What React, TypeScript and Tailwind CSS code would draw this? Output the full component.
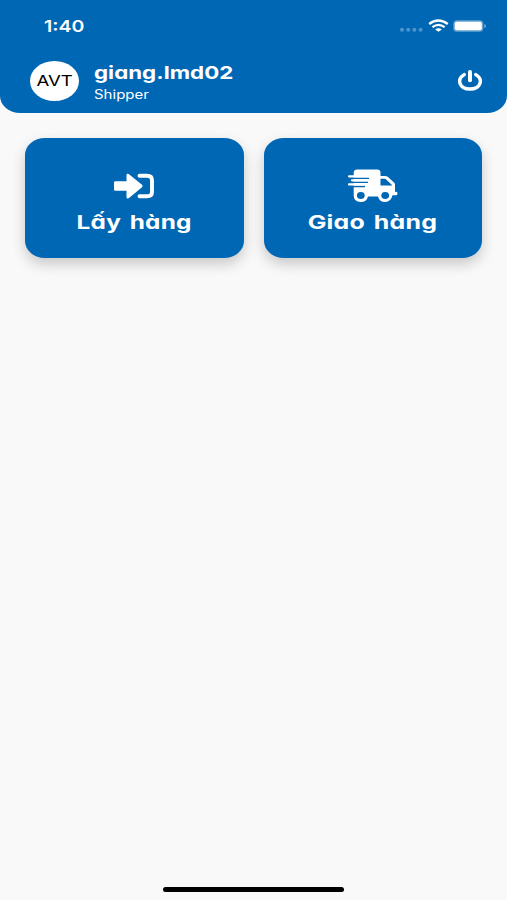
import type { ReactNode } from "react";

function ArrowIcon() {
  return (
    <svg className="h-[26px] w-[42px]" viewBox="0 0 42 26" fill="none">
      <path d="M2.5 8.2H13.5V2.3C13.5.7 15 .4 16 1.3L29 11.8Q30.3 13 29 14.2L16 24.9C15 25.8 13.5 25.4 13.5 23.9V17.8H2.5Q1 17.8 1 16.5V9.5Q1 8.2 2.5 8.2Z" fill="white" />
      <path d="M26.5 2.7H34Q39 2.7 39 7.2V19Q39 23.3 34 23.3H26.5" stroke="white" strokeWidth="3.9" strokeLinecap="round" />
    </svg>
  );
}

function TruckIcon() {
  return (
    <svg className="h-[34px] w-[50px]" viewBox="0 0 50 34" fill="none">
      <path d="M9 .5H29Q32.5 .5 32.5 3.500V7H37Q38.7 7 40 8L46 13.4Q47 14.3 47 15.6V22.8H48Q49.5 22.8 49.5 24.4Q49.5 26.3 47.5 26.3H44.500Q43 33 37.200 33T30 27.5H20Q18.7 33 12.6 33Q5.7 33 5.700 26.5V4Q5.7 .5 9 .5Z" fill="white" />
      <path d="M32.5 9.8H36.6Q37.5 9.8 38.2 10.5L44 16V16.6H32.5Z" fill="#0067b5" />
      <ellipse cx="12.8" cy="26.500" rx="3.9" ry="3.4" fill="#0067b5" />
      <ellipse cx="37.2" cy="26.500" rx="3.9" ry="3.4" fill="#0067b5" />
      <path d="M0 9.3H21M4 13.3H20M0 17.4H17" stroke="#0067b5" strokeWidth="1.5" />
      <path d="M1 7.3H22M4 11.3H21M1 15.3H18" stroke="white" strokeWidth="2.2" strokeLinecap="round" />
    </svg>
  );
}

function PowerIcon() {
  return (
    <svg className="h-[22px] w-[26px]" viewBox="0 0 26 22" fill="none" stroke="white" strokeLinecap="round">
      <path d="M7.2 4.6C-.7 9.3 2.3 19 13 19S26.700 9.300 18.800 4.600" strokeWidth="3.4" />
      <path d="M13 2V10.300" strokeWidth="4" />
    </svg>
  );
}

function StatusIcons() {
  return (
    <svg className="h-4 w-[88px]" viewBox="0 0 88 16" fill="none">
      <g fill="white" fillOpacity=".3">
        <circle cx="4" cy="11.800" r="2" />
        <circle cx="10.200" cy="11.800" r="2" />
        <circle cx="16.400" cy="11.800" r="2" />
        <circle cx="22.600" cy="11.800" r="2" />
      </g>
      <path d="M31.200 6Q40 -1 49.800 6M34.400 9.200Q40.500 4.500 46.600 9.200" stroke="white" strokeWidth="2.300" />
      <path d="M37.200 11.500Q40.500 8.800 43.800 11.500L40.500 13.800Z" fill="white" />
      <rect x="55.300" y="2.200" width="30" height="11.600" rx="3.500" fill="white" fillOpacity=".4" />
      <rect x="56.800" y="3.700" width="27" height="8.600" rx="2" fill="white" />
      <path d="M86.400 6V10Q88 9.300 88 8T86.400 6Z" fill="white" fillOpacity=".5" />
    </svg>
  );
}

function ActionCard({ icon, children }: { icon: ReactNode; children: ReactNode }) {
  return (
    <button className="flex h-[120px] flex-1 flex-col items-center rounded-[20px/17px] bg-[#0067b5] pt-[31px] text-white shadow-[0_6px_14px_rgba(0,0,0,0.2)]">
      <span className="flex h-[34px] items-center">{icon}</span>
      <span className="mt-[8px] text-[19px] leading-6 font-bold whitespace-nowrap">{children}</span>
    </button>
  );
}

export default function App() {
  return (
    <div className="flex h-[900px] w-[507px] flex-col bg-[#f9f9f9] font-['Inter','Liberation_Sans',sans-serif] [font-feature-settings:'cv11']">
      <header className="h-[113px] rounded-b-[20px_17px] bg-[#0067b5] text-white">
        <div className="flex h-[52px] items-center justify-between pr-[21px] pl-[44px]">
          <span className="origin-left scale-x-[1.220] text-[16px] leading-5 font-semibold">1:40</span>
          <StatusIcons />
        </div>
        <div className="flex h-[58px] items-center pr-[24px] pl-[30px]">
          <div className="flex h-[40px] w-[49px] items-center justify-center rounded-[50%] bg-white text-black">
            <span className="scale-x-[1.240] text-[15px] leading-5 font-normal">AVT</span>
          </div>
          <div className="ml-[15px] flex flex-1 flex-col items-start pt-1">
            <span className="origin-left scale-x-[1.240] text-[18px] leading-6 font-bold">giang.lmd02</span>
            <span className="origin-left scale-x-[1.200] text-[12.500px] leading-5">Shipper</span>
          </div>
          <PowerIcon />
        </div>
      </header>
      <main className="flex flex-1 gap-5 px-[25px] pt-[25px]">
        <ActionCard icon={<ArrowIcon />}>
          <span className="inline-block scale-x-[1.280] tracking-[0.2px] [word-spacing:2px]">Lấy hàng</span>
        </ActionCard>
        <ActionCard icon={<TruckIcon />}>
          <span className="inline-block scale-x-[1.310] tracking-[0.2px] [word-spacing:2px]">Giao hàng</span>
        </ActionCard>
      </main>
      <footer className="flex justify-center pb-2">
        <div className="h-[5px] w-[181px] rounded-full bg-black" />
      </footer>
    </div>
  );
}
